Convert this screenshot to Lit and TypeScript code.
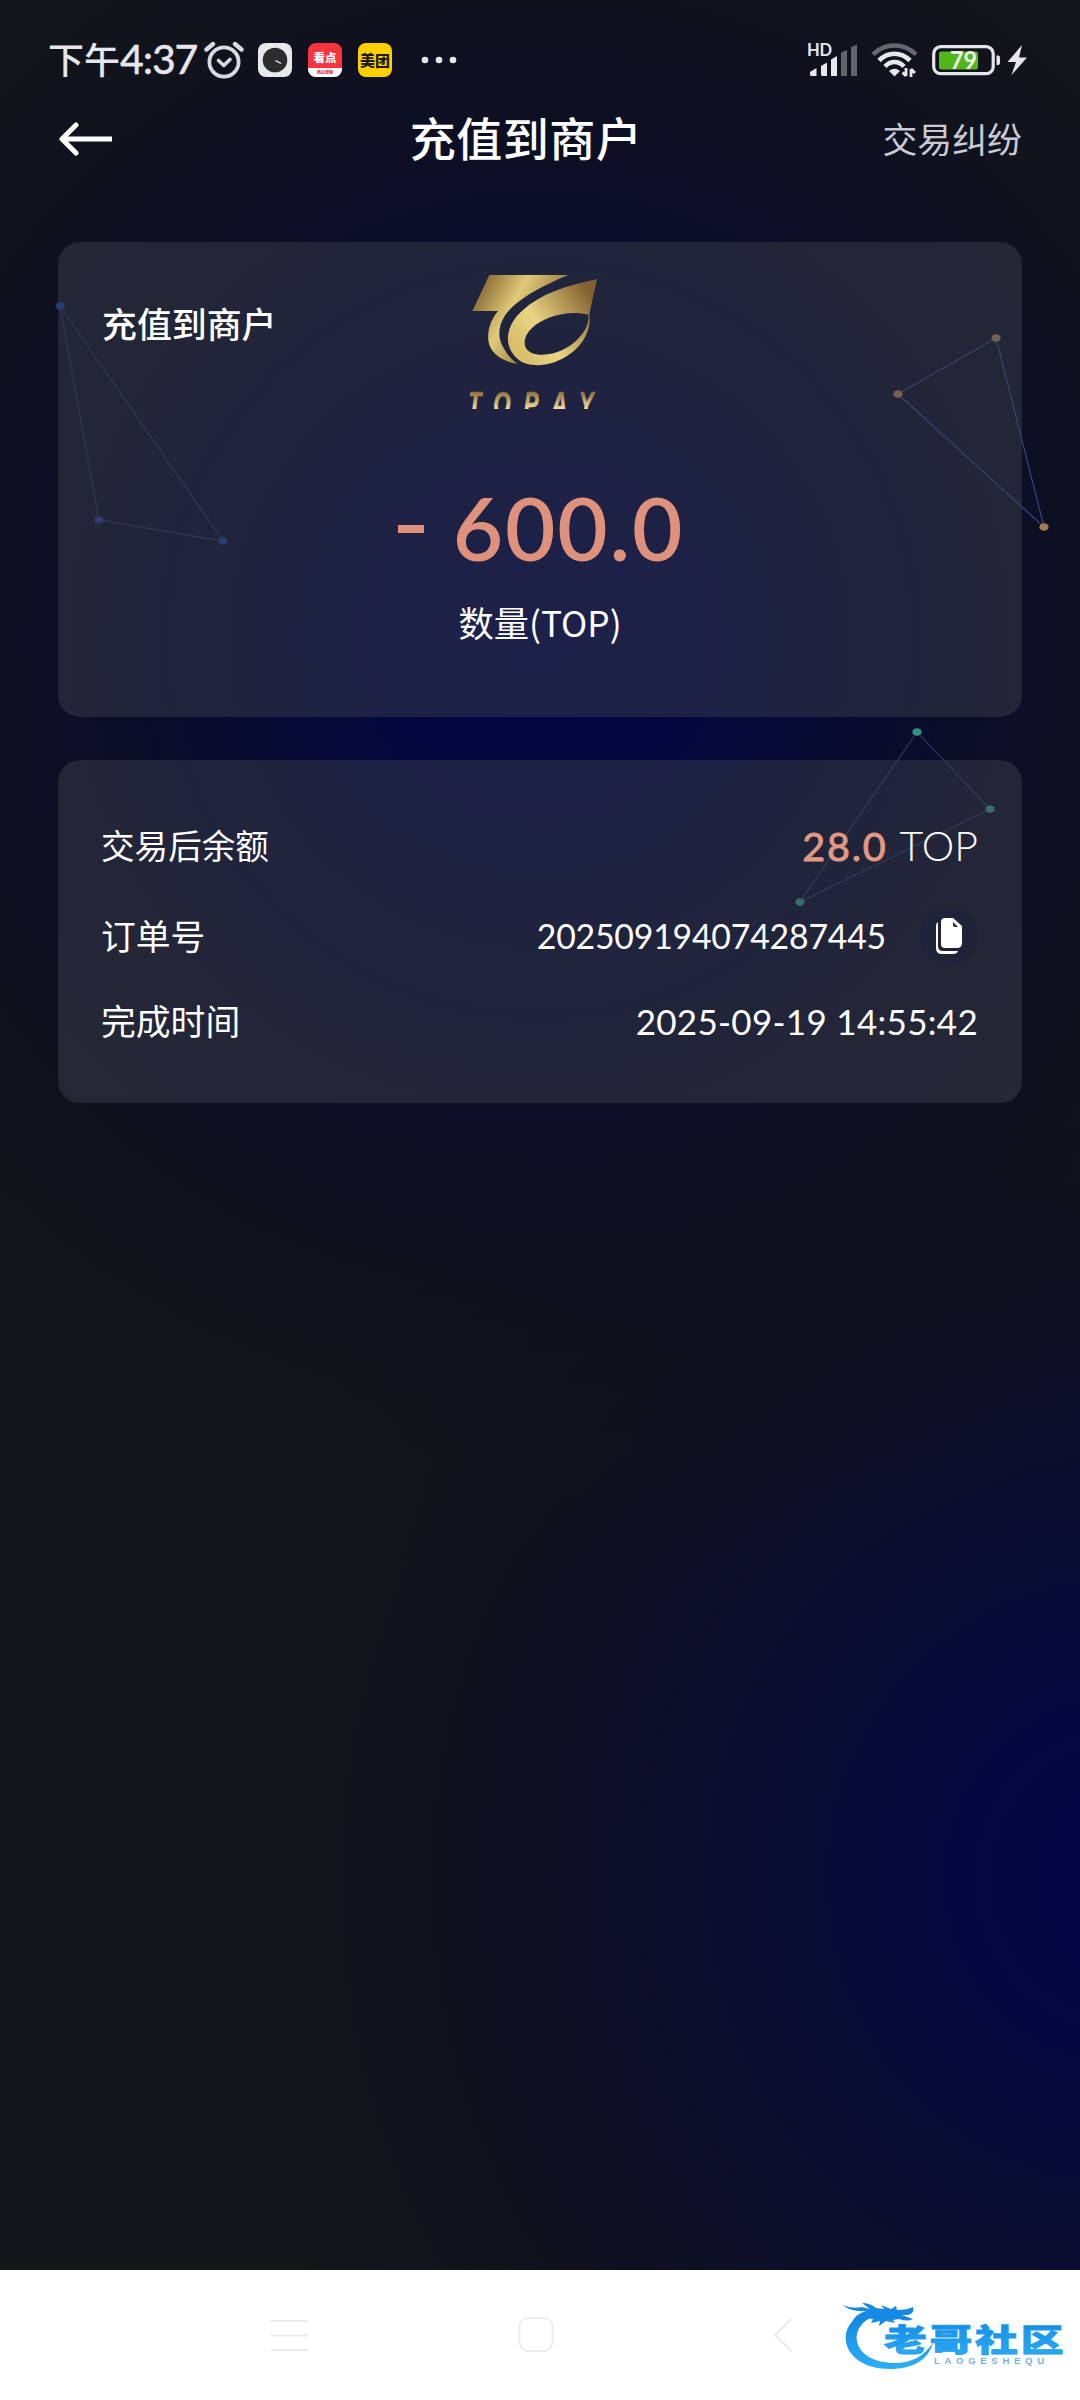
import { LitElement, css, html, svg } from 'lit';
import { customElement, property } from 'lit/decorators.js';

interface Shape {
  dot: string;
  line: string;
  points: number[][];
}

@customElement('status-bar')
export class StatusBar extends LitElement {
  static styles = css`
    :host {
      display: flex;
      align-items: center;
      justify-content: space-between;
      box-sizing: border-box;
      height: 104px;
      padding: 16px 52px 0 48px;
      color: #e6e6ec;
    }
    .side {
      display: flex;
      align-items: center;
    }
    .time {
      width: 156px;
      margin-top: -3px;
      font-size: 36px;
      line-height: 40px;
      font-weight: 500;
      white-space: nowrap;
    }
    .digits {
      font-family: Lato, sans-serif;
      font-size: 41px;
      letter-spacing: -1.1px;
      -webkit-text-stroke: 0.3px #e6e6ec;
    }
    .alarm {
      margin-right: 14px;
    }
    .app {
      display: flex;
      flex-direction: column;
      align-items: center;
      justify-content: center;
      width: 34px;
      height: 34px;
      margin-right: 16px;
      border-radius: 8px;
      overflow: hidden;
      background: #e9e9ec;
    }
    .news {
      justify-content: space-between;
      background: #f8343f;
      color: #fff;
      font-size: 11.5px;
      line-height: 29px;
      font-weight: 900;
    }
    .news small {
      width: 100%;
      height: 9px;
      background: #fff;
      color: #e33;
      font-size: 4px;
      line-height: 9px;
      text-align: center;
    }
    .news span {
      height: 25px;
    }
    .food {
      margin-right: 29px;
      background: #ffd000;
      color: #1d1a10;
      font-size: 15px;
      line-height: 34px;
      font-weight: 900;
    }
    .signal {
      margin-right: 13px;
    }
    .wifi {
      margin-right: 14px;
    }
    svg {
      display: block;
    }
    text {
      font-family: Lato, sans-serif;
    }
  `;

  render() {
    return html`
      <div class="side">
        <div class="time">下午<span class="digits">4:37</span></div>
        <svg class="alarm" width="40" height="38" viewBox="0 0 40 38" fill="none" stroke="#d9d9df" stroke-linecap="round">
          <circle cx="20" cy="21" r="14.6" stroke-width="3.8" />
          <path d="M2.5 8.5 9 3M37.500 8.500 31 3" stroke-width="4.400" />
          <path d="M14.500 19.500 19.800 24.500 26 18.500" stroke-width="3.600" stroke-linejoin="round" />
        </svg>
        <div class="app">
          <svg width="34" height="34" viewBox="0 0 34 34">
            <circle cx="17" cy="17" r="12.300" fill="#2c2c2e" />
            <path d="M17.500 17.500 23 20.500" stroke="#fff" stroke-width="1.300" />
          </svg>
        </div>
        <div class="app news"><span>看点</span><small>西瓜视频</small></div>
        <div class="app food">美团</div>
        <svg width="36" height="8" viewBox="0 0 36 8" fill="#e6e6ec">
          <circle cx="4" cy="4" r="3.300" />
          <circle cx="18" cy="4" r="3.300" />
          <circle cx="32" cy="4" r="3.300" />
        </svg>
      </div>
      <div class="side">
        <svg class="signal" width="50" height="36" viewBox="0 0 50 36" fill="#e8e8ec">
          <text x="-1" y="14" font-size="16.500" font-weight="700" textLength="25">HD</text>
          <path d="M2 30 8.500 26V34H3.500Q2 34 2 32.500ZM13 24 19 20.500V34H14.500Q13 34 13 32.500ZM23 17.500 29 14V34H23Z" />
          <path d="M33 10.500 39 8V34H33ZM43 5 49 2.500V34H43Z" fill="#62636d" />
        </svg>
        <svg class="wifi" width="47" height="36" viewBox="0 0 47 36" fill="none">
          <path d="M2 12.500C14 .5 33 .5 45 12.500" stroke="#666771" stroke-width="4.500" />
          <path d="M8 18.500C17 9.500 30 9.500 39 18.500" stroke="#e8e8ec" stroke-width="4.600" />
          <path d="M14 24.500C19.500 18.500 27.500 18.500 33 24.500" stroke="#e8e8ec" stroke-width="4.600" />
          <path d="M18 29Q23.500 24.500 29 29L23.500 34.500Z" fill="#e8e8ec" />
          <path d="M35 26V34M35 34 31.500 30.500M40 35V27M40 27 44 31" stroke="#e8e8ec" stroke-width="2.800" />
        </svg>
        <svg width="96" height="32" viewBox="0 0 96 32">
          <rect x="1.700" y="2.700" width="59.500" height="27" rx="7" fill="none" stroke="#e6e6ea" stroke-width="3.200" />
          <rect x="7" y="7.500" width="39" height="18" rx="2" fill="#51b51b" />
          <path d="M64.500 11.500H66Q68 11.500 68 13.500V19Q68 21 66 21H64.500Z" fill="#e6e6ea" />
          <text x="18" y="25" font-size="24" font-weight="700" fill="#eef2ea" textLength="27" lengthAdjust="spacingAndGlyphs">79</text>
          <path d="M90 1 75.500 18H84L79.500 31 95 13.500H87Z" fill="#e6e6ea" />
        </svg>
      </div>
    `;
  }
}

@customElement('detail-row')
export class DetailRow extends LitElement {
  @property() label = '';

  static styles = css`
    :host {
      display: flex;
      align-items: center;
      justify-content: space-between;
      color: #fff;
      font-size: 34.8px;
      line-height: 50px;
    }
    .label {
      margin: -3px 0 0 -1px;
    }
    .value {
      display: flex;
      align-items: center;
      font-family: Lato, sans-serif;
    }
  `;

  render() {
    return html`
      <span class="label">${this.label}</span>
      <div class="value"><slot></slot></div>
    `;
  }
}

@customElement('nav-bar')
export class NavBar extends LitElement {
  static styles = css`
    :host {
      display: flex;
      align-items: center;
      box-sizing: border-box;
      height: 130px;
      padding-left: 271px;
      background: #fff;
    }
    svg {
      display: block;
      flex: none;
    }
    .menu {
      margin-right: 209px;
    }
    .home {
      margin-right: 219px;
    }
    .mark {
      margin: 8px 0 0 49px;
    }
    .name {
      font-family: 'Noto Sans CJK SC', sans-serif;
      font-weight: 900;
    }
    .latin {
      font-family: 'Liberation Sans', sans-serif;
    }
  `;

  render() {
    return html`
      <svg class="menu" width="38" height="36" viewBox="0 0 38 36" stroke="#ebebeb" stroke-width="2">
        <path d="M0 4H37M0 18.500H37M0 33H37" />
      </svg>
      <svg class="home" width="36" height="38" viewBox="0 0 36 38" fill="none" stroke="#ececec" stroke-width="2">
        <rect x="1.500" y="2" width="33" height="33" rx="9" />
      </svg>
      <svg width="20" height="36" viewBox="0 0 20 36" fill="none" stroke="#ebebeb" stroke-width="2">
        <path d="M19 1.500 2 18 19 34.500" />
      </svg>
      <svg class="mark" width="226" height="84" viewBox="0 0 226 84">
        <defs>
          <linearGradient id="blue" x1="0" y1="0" x2="0" y2="1">
            <stop offset="0" stop-color="#1285e2" />
            <stop offset="1" stop-color="#2bb0f5" />
          </linearGradient>
        </defs>
        <path fill="url(#blue)" d="M22 17C8 23 2 33 4 45C7 61 24 72 48 72C69 72 86 64 91 46C82 59 70 66 53 66C32 66 17 57 15 44C13 33 21 23 33 19Z" />
        <path fill="#1689e3" d="M1 8Q9 12 20 10L28 12L20 6Q28 6 34 11L42 12L39 8L49 12L54 9L55 13Q65 13 71 10Q73 16 66 18L60 18L71 22Q66 25 57 22L51 23L53 26L44 24L37 29L38 24L29 26L31 22L22 21Q14 22 9 27Q13 17 24 14Q8 15 1 8Z" />
        <text class="name" fill="url(#blue)" stroke="#1f9bee" stroke-width=".8" font-size="31" transform="translate(42 54) scale(1.380 1)"
          textLength="130">老哥社区</text>
        <text class="latin" x="92" y="66.500" font-size="9.500" font-weight="700" fill="#6fb4e4" textLength="110">LAOGESHEQU</text>
      </svg>
    `;
  }
}

@customElement('app-root')
export class AppRoot extends LitElement {
  shapes: Shape[] = [
    { dot: '#1d3a88', line: '#262e54', points: [[60, 306], [99, 520], [223, 541]] },
    { dot: '#a27a50', line: '#393f78', points: [[996, 338], [898, 394], [1044, 527]] },
    { dot: '#2e9285', line: '#2f3158', points: [[917, 732], [990, 809], [800, 902]] },
  ];

  static styles = css`
    :host {
      position: relative;
      display: flex;
      flex-direction: column;
      width: 1080px;
      height: 2400px;
      overflow: hidden;
      font-family: 'Noto Sans CJK SC', sans-serif;
      background:
        radial-gradient(circle 960px at 540px 640px, #030544 0%, #04073e 17%, rgba(7, 10, 48, 0.97) 32%, rgba(11, 14, 39, 0.93) 48%, rgba(14, 16, 32, 0.8) 65%, rgba(17, 19, 28, 0.35) 85%, rgba(19, 21, 25, 0) 100%),
        radial-gradient(circle 940px at 1130px 1880px, #020445 0%, #04073f 18%, #090c32 36%, #0d0f26 58%, #11121d 76%, #141619 100%);
    }
    .web {
      position: absolute;
      left: 0;
      top: 0;
    }
    svg {
      display: block;
    }
    .title-bar {
      display: grid;
      grid-template-columns: 200px 1fr 200px;
      align-items: center;
      height: 70px;
      padding: 0 58px;
      margin-bottom: 68px;
      color: #fff;
    }
    h1 {
      margin: -7px 28px 0 0;
      font-size: 46px;
      line-height: 60px;
      font-weight: 500;
      letter-spacing: 0.5px;
      text-align: center;
      white-space: nowrap;
    }
    .dispute {
      margin-top: -3px;
      color: #c9cad3;
      font-size: 34.9px;
      line-height: 50px;
      text-align: right;
    }
    main {
      position: relative;
      display: flex;
      flex-direction: column;
      gap: 43px;
      padding: 0 58px;
    }
    .card {
      box-sizing: border-box;
      border-radius: 22px;
      background: rgba(63, 66, 80, 0.45);
      color: #fff;
    }
    .summary {
      display: grid;
      grid-template-columns: 1fr 130px 1fr;
      grid-template-rows: 215px 90px 1fr;
      height: 475px;
      padding: 0 44px;
    }
    .kind {
      padding-top: 56px;
      font-size: 34.9px;
      line-height: 50px;
      font-weight: 500;
    }
    .logo {
      margin: 28px 0 0 -5px;
    }
    .logo text {
      font-family: 'Liberation Sans', sans-serif;
      font-size: 104px;
      font-weight: 700;
      font-style: italic;
    }
    .amount {
      grid-column: 1 / 4;
      display: flex;
      justify-content: center;
      align-items: center;
      height: 142px;
      color: #de927c;
      font-family: Lato, sans-serif;
      font-size: 87px;
      line-height: 90px;
      font-weight: 600;
      letter-spacing: 1.8px;
    }
    .minus {
      width: 26px;
      height: 8px;
      margin: 1px 29px 0 2px;
      background: #de927c;
    }
    .unit {
      grid-column: 1 / 4;
      padding-top: 50px;
      font-size: 35.3px;
      line-height: 50px;
      text-align: center;
    }
    .details {
      display: flex;
      flex-direction: column;
      height: 343px;
      padding: 61px 44px 0;
    }
    .first {
      font-size: 33.6px;
    }
    .order {
      margin: 40px 0 35px;
    }
    .balance {
      margin-right: 12px;
      color: #e39884;
      font-size: 39.5px;
      letter-spacing: 1.8px;
      -webkit-text-stroke: 0.9px #e39884;
    }
    .coin {
      font-size: 41px;
      font-weight: 300;
      letter-spacing: 0.1px;
    }
    .number {
      font-size: 33.8px;
      letter-spacing: -0.2px;
    }
    .copy {
      display: flex;
      align-items: center;
      justify-content: center;
      width: 58px;
      height: 58px;
      margin: -4px 0 -4px 34px;
      border-radius: 50%;
      background: rgba(28, 29, 58, 0.3);
    }
    .date {
      font-size: 35px;
      letter-spacing: 0.3px;
    }
    nav-bar {
      position: relative;
      margin-top: auto;
    }
  `;

  renderShape(s: Shape) {
    return svg`
      <polygon points=${s.points.map((p) => p.join(',')).join(' ')} fill="none" stroke=${s.line} stroke-width="1.3" />
      ${s.points.map((p) => svg`<ellipse cx=${p[0]} cy=${p[1]} rx="4.6" ry="3.8" fill=${s.dot} />`)}
    `;
  }

  renderLogo() {
    return html`
      <svg class="logo" width="130" height="139" viewBox="90 60 390 417">
        <defs>
          <linearGradient id="goldT" gradientUnits="userSpaceOnUse" x1="110" y1="100" x2="330" y2="220">
            <stop offset="0" stop-color="#80602f" />
            <stop offset=".5" stop-color="#e0ca78" />
            <stop offset="1" stop-color="#94733a" />
          </linearGradient>
          <linearGradient id="goldO" gradientUnits="userSpaceOnUse" x1="220" y1="290" x2="455" y2="130">
            <stop offset="0" stop-color="#d9bd6b" />
            <stop offset=".35" stop-color="#ead583" />
            <stop offset="1" stop-color="#80602e" />
          </linearGradient>
          <linearGradient id="goldText" gradientUnits="userSpaceOnUse" x1="0" y1="-74" x2="0" y2="-22">
            <stop offset="0" stop-color="#8e6b38" />
            <stop offset="1" stop-color="#f2e3a0" />
          </linearGradient>
        </defs>
        <path fill="url(#goldT)" d="M148 75H385C310 106 258 135 220 168C180 203 165 252 191 294C201 313 214 329 232 342C183 334 148 306 145 270C142 235 154 208 174 183H97Z" />
        <path fill="url(#goldO)" fill-rule="evenodd" d="M471 88 448 192C456 251 417 309 345 336C311 349 263 350 238 331C187 291 195 228 248 181C303 131 382 105 471 88ZM445 194C382 179 311 201 276 234C247 261 246 297 275 309C306 322 359 311 397 282C430 257 449 224 445 194Z" />
        <g fill="url(#goldText)" stroke="url(#goldText)" stroke-width="2">
          <text transform="translate(83 499) scale(.64 1)">T</text>
          <text transform="translate(160 499) scale(.64 1)">O</text>
          <text transform="translate(251 499) scale(.64 1)">P</text>
          <text transform="translate(334 499) scale(.64 1)">A</text>
          <text transform="translate(416 499) scale(.64 1)">Y</text>
        </g>
      </svg>
    `;
  }

  render() {
    return html`
      <svg class="web" width="1080" height="1200" viewBox="0 0 1080 1200">${this.shapes.map((s) => this.renderShape(s))}</svg>
      <status-bar></status-bar>
      <div class="title-bar">
        <svg width="56" height="34" viewBox="0 0 56 34" fill="none" stroke="#fff" stroke-width="5">
          <path d="M4 17H54" />
          <path d="M18 3 4 17 18 31" stroke-linecap="round" stroke-linejoin="round" />
        </svg>
        <h1>充值到商户</h1>
        <span class="dispute">交易纠纷</span>
      </div>
      <main>
        <section class="card summary">
          <span class="kind">充值到商户</span>
          ${this.renderLogo()}
          <span></span>
          <div class="amount"><i class="minus"></i>600.0</div>
          <div class="unit">数量(TOP)</div>
        </section>
        <section class="card details">
          <detail-row class="first" label="交易后余额">
            <span class="balance">28.0</span><span class="coin">TOP</span>
          </detail-row>
          <detail-row class="order" label="订单号">
            <span class="number">202509194074287445</span>
            <span class="copy">
              <svg width="28" height="38" viewBox="0 0 28 38" fill="#fff">
                <path d="M3 5V29Q3 34 8 34H23Q22 37 18 37H7Q1 37 1 31V9Q1 6 3 5Z" />
                <path d="M10 1H18L27 9V26Q27 31 22 31H10Q6 31 6 27V5Q6 1 10 1Z" />
                <path d="M18 5V8Q18 10 20 10H23Z" fill="#23243a" />
              </svg>
            </span>
          </detail-row>
          <detail-row label="完成时间"><span class="date">2025-09-19 14:55:42</span></detail-row>
        </section>
      </main>
      <nav-bar></nav-bar>
    `;
  }
}
